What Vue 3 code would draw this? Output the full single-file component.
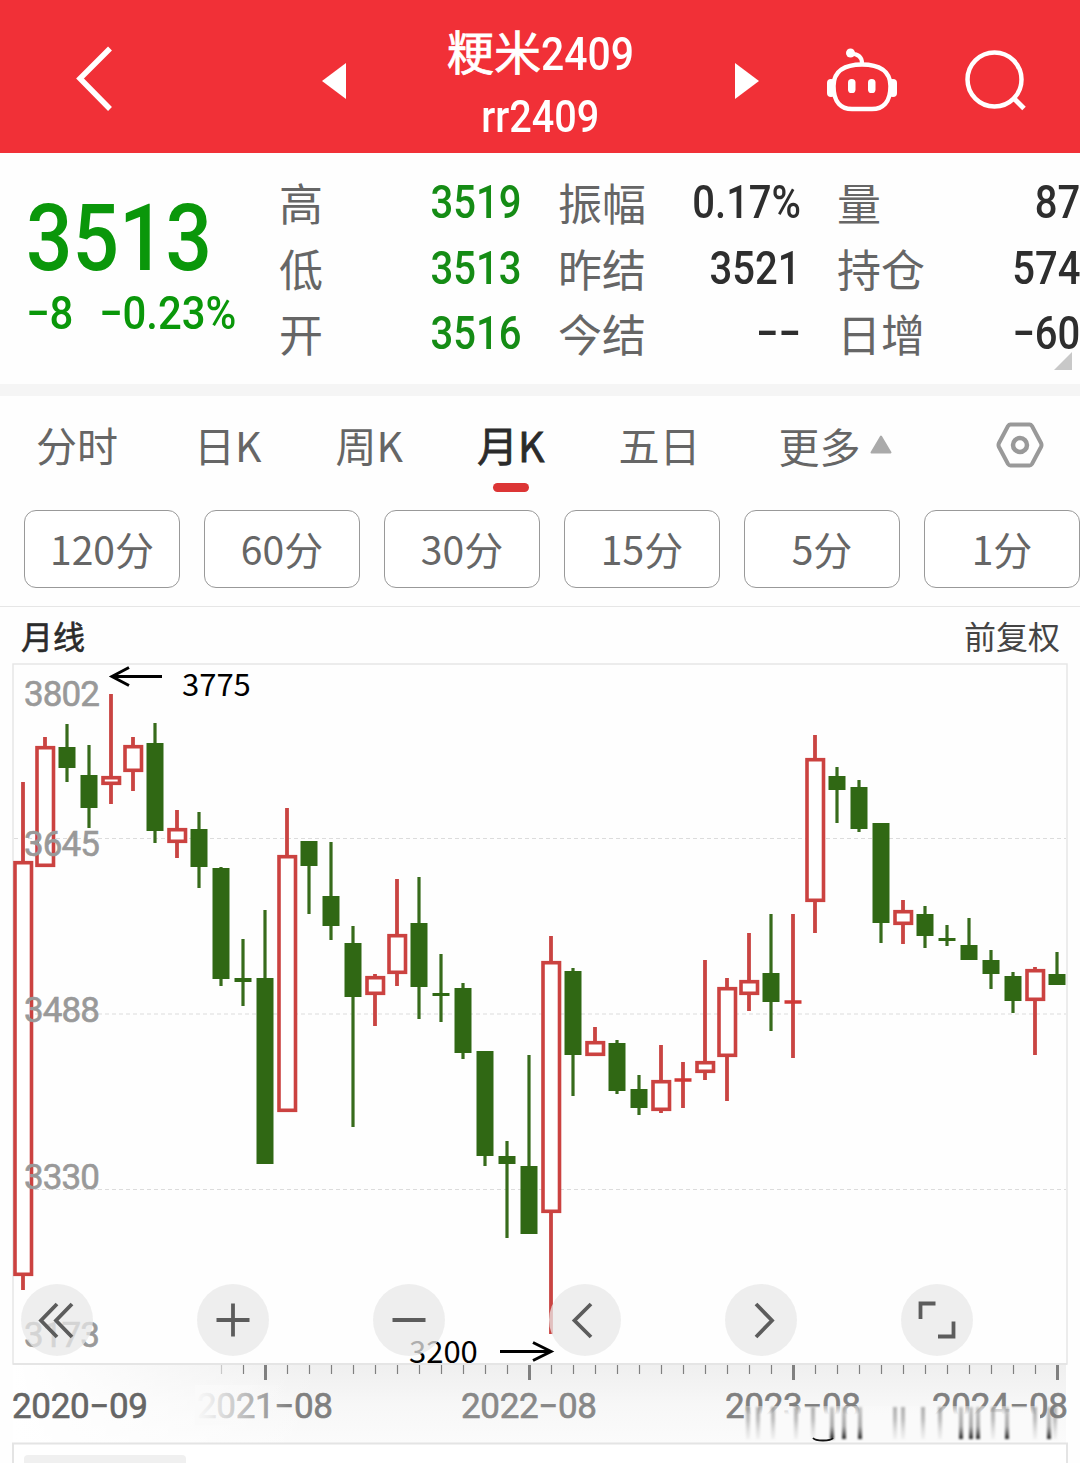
<template>
  <div class="page">
    <header class="header">
      <svg class="back" viewBox="0 0 44 72" width="44" height="72">
        <path d="M38 3.500 L8 33.500 L38 64" fill="none" stroke="#fff" stroke-width="5.500" />
      </svg>
      <svg class="prev" viewBox="0 0 24 36" width="24" height="36">
        <path d="M24 0 V36 L0 18 Z" fill="#fff" />
      </svg>
      <div class="title">
        <div class="name">粳米<span class="num">2409</span></div>
        <div class="code"><span class="num">rr2409</span></div>
      </div>
      <svg class="next" viewBox="0 0 24 36" width="24" height="36">
        <path d="M0 0 V36 L24 18 Z" fill="#fff" />
      </svg>
      <svg class="robot" viewBox="0 0 70 66" width="70" height="66">
        <path d="M35 15 C35 9 31 6 24 5.500" fill="none" stroke="#fff" stroke-width="4" />
        <circle cx="23.500" cy="5" r="4.500" fill="#fff" />
        <path d="M35 16.500 C52 16.500 63.500 23 63.500 38 C63.500 55 55 61 45 61 H25 C15 61 6.500 55 6.500 38 C6.500 23 18 16.500 35 16.500 Z" fill="none" stroke="#fff" stroke-width="4.500" />
        <rect x="0" y="31" width="8" height="18" rx="4" fill="#fff" />
        <rect x="62" y="31" width="8" height="18" rx="4" fill="#fff" />
        <rect x="21" y="31" width="7.500" height="14" rx="3.600" fill="#fff" />
        <rect x="41" y="31" width="7.500" height="14" rx="3.600" fill="#fff" />
      </svg>
      <svg class="search" viewBox="0 0 62 62" width="62" height="62">
        <circle cx="29.500" cy="29.500" r="27" fill="none" stroke="#fff" stroke-width="4.500" />
        <path d="M49 48.500 L59 58.500" stroke="#fff" stroke-width="5" />
      </svg>
    </header>

    <section class="quote">
      <div class="price">
        <div class="last"><span class="num">3513</span></div>
        <div class="change">
          <span class="num">−8</span>
          <span class="num">−0.23%</span>
        </div>
      </div>
      <div class="stats">
        <div v-for="item in stats" :key="item.label" class="stat">
          <span class="label">{{ item.label }}</span>
          <span class="num" :class="{ down: item.down }">{{ item.value }}</span>
        </div>
      </div>
      <svg class="corner" viewBox="0 0 18 18" width="18" height="18">
        <path d="M18 0 V18 H0 Z" fill="#c8c8c8" />
      </svg>
    </section>

    <nav class="tabs">
      <div
        v-for="tab in tabs"
        :key="tab"
        class="tab"
        :class="{ active: tab === activeTab }"
        @click="activeTab = tab"
      >
        {{ tab }}
      </div>
      <div class="tab more">
        更多
        <svg viewBox="0 0 22 19" width="22" height="19">
          <path d="M11 1.500 L20.500 17.500 H1.500 Z" fill="#aaa" stroke="#aaa" stroke-width="2" stroke-linejoin="round" />
        </svg>
      </div>
      <svg class="settings" viewBox="0 0 48 48" width="48" height="48">
        <path d="M14.500 3.500 H33.500 Q35 3.500 36 5 L45 22 Q46 24 45 26 L36 43 Q35 44.500 33.500 44.500 H14.500 Q13 44.500 12 43 L3 26 Q2 24 3 22 L12 5 Q13 3.500 14.500 3.500 Z" fill="none" stroke="#999" stroke-width="4" />
        <circle cx="24" cy="24" r="7" fill="none" stroke="#999" stroke-width="4.500" />
      </svg>
    </nav>

    <div class="periods">
      <button v-for="p in periods" :key="p" class="period">{{ p }}</button>
    </div>

    <div class="chart-head">
      <span class="kind">月线</span>
      <span class="adjust">前复权</span>
    </div>

    <div class="chart">
      <svg class="plot" viewBox="0 660 1080 803" width="1080" height="803">
        <defs>
          <linearGradient id="axisY" x1="0" y1="0" x2="0" y2="1">
            <stop offset="0" stop-color="#efefef" />
            <stop offset="0.500" stop-color="#f7f7f7" />
            <stop offset="1" stop-color="#fbfbfb" />
          </linearGradient>
          <linearGradient id="axisX" x1="0" y1="0" x2="1" y2="0">
            <stop offset="0" stop-color="#fff" />
            <stop offset="1" stop-color="#fff" stop-opacity="0" />
          </linearGradient>
          <linearGradient id="dateFade" x1="0" y1="0" x2="1" y2="0">
            <stop offset="0" stop-color="#fafafa" />
            <stop offset="0.150" stop-color="#fafafa" stop-opacity="0.900" />
            <stop offset="1" stop-color="#fafafa" stop-opacity="0" />
          </linearGradient>
          <linearGradient id="smear" x1="0" y1="0" x2="0" y2="1">
            <stop offset="0" stop-color="#fafafa" stop-opacity="0.400" />
            <stop offset="0.250" stop-color="#fafafa" />
          </linearGradient>
          <linearGradient id="streak" x1="0" y1="0" x2="0" y2="1">
            <stop offset="0" stop-color="#777" stop-opacity="0.550" />
            <stop offset="0.400" stop-color="#777" stop-opacity="0.450" />
            <stop offset="1" stop-color="#aaa" stop-opacity="0.100" />
          </linearGradient>
          <linearGradient id="streakDark" x1="0" y1="0" x2="0" y2="1">
            <stop offset="0" stop-color="#777" stop-opacity="0.400" />
            <stop offset="0.600" stop-color="#777" stop-opacity="0.600" />
            <stop offset="1" stop-color="#222" />
          </linearGradient>
        </defs>

        <!-- frame and price grid -->
        <rect x="13" y="664" width="1054" height="700" fill="none" stroke="#e6e6e6" stroke-width="1.500" />
        <line v-for="y in gridLines" :key="y" x1="14" :y1="y" x2="1066" :y2="y" stroke="#dcdcdc" stroke-width="1.200" stroke-dasharray="4 3" />

        <g v-for="c in candles" :key="c.x">
          <template v-if="c.up">
            <path :d="`M${c.x} ${c.high} V${c.top + 1} M${c.x} ${c.bottom - 1} V${c.low}`" stroke="#c94442" stroke-width="3.800" />
            <line v-if="c.bottom - c.top < 6" :x1="c.x - 8.5" :x2="c.x + 8.5" :y1="(c.top + c.bottom) / 2" :y2="(c.top + c.bottom) / 2" stroke="#d03836" stroke-width="3.500" />
            <rect v-else :x="c.x - 8" :y="c.top + 1.7" width="16.5" :height="c.bottom - c.top - 3.4" fill="#fff" stroke="#cb4240" stroke-width="3.600" />
          </template>
          <template v-else>
            <line :x1="c.x" :x2="c.x" :y1="c.high" :y2="c.low" stroke="#376b1b" stroke-width="3.200" />
            <rect :x="c.x - 8.5" :y="c.top" width="17" :height="c.bottom - c.top" fill="#306814" />
          </template>
        </g>

        <text v-for="l in priceLabels" :key="l.text" class="axis-num" x="24" :y="l.y" textLength="76" lengthAdjust="spacing" fill="#999" stroke="#999">{{ l.text }}</text>

        <!-- highest / lowest marks -->
        <path d="M162 676.500 H113 M129 667.500 L112 676.500 L129 685.500" fill="none" stroke="#000" stroke-width="3" />
        <text class="mark" x="182" y="695.500">3775</text>
        <path d="M500 1351.500 H550 M533 1342.500 L551 1351.500 L533 1360.500" fill="none" stroke="#000" stroke-width="3" />
        <text class="mark" x="409" y="1362.500">3200</text>

        <!-- time axis -->
        <rect x="13" y="1365" width="1053" height="78" fill="url(#axisY)" />
        <rect x="13" y="1365" width="310" height="78" fill="url(#axisX)" />
        <line x1="13" x2="1067" y1="1364" y2="1364" stroke="#e3e3e3" stroke-width="1.500" />
        <line v-for="t in ticks" :key="t.x" :x1="t.x" :x2="t.x" y1="1365" :y2="t.major ? 1380 : 1374" :stroke="t.faint ? '#c8c8c8' : '#808080'" :stroke-width="t.major ? 3 : 1.2" />
        <text v-for="d in dates" :key="d.text" class="axis-num" :x="d.x" y="1418" textLength="136" lengthAdjust="spacing" :fill="d.color" :stroke="d.color">{{ d.text }}</text>
        <rect x="195" y="1385" width="95" height="40" fill="url(#dateFade)" />

        <rect x="746" y="1406" width="294" height="35" fill="url(#smear)" />
        <g class="streaks">
          <rect v-for="s in streaks" :key="s.x" :x="s.x - 2" y="1407" width="4" height="32" :fill="s.dark ? 'url(#streakDark)' : 'url(#streak)'" />
        </g>
        <path d="M813 1438 Q815 1440.500 823 1440.500 Q831 1440.500 833 1438" fill="none" stroke="#111" stroke-width="1.800" />

        <!-- next panel -->
        <path d="M13 1463 V1443.500 H1067 V1463" fill="#fff" stroke="#e4e4e4" stroke-width="2" />
        <rect x="24" y="1455" width="162" height="20" rx="4" fill="#f0f0f0" />
      </svg>

      <div class="tools">
        <button v-for="t in tools" :key="t.name" class="tool" :aria-label="t.name">
          <svg viewBox="0 0 72 72" width="72" height="72">
            <path :d="t.path" fill="none" stroke="#5c5c5c" stroke-width="3.800" />
          </svg>
        </button>
      </div>
    </div>
  </div>
</template>

<script setup>
import { ref } from 'vue'

const stats = [
  { label: '高', value: '3519', down: true },
  { label: '振幅', value: '0.17%' },
  { label: '量', value: '87' },
  { label: '低', value: '3513', down: true },
  { label: '昨结', value: '3521' },
  { label: '持仓', value: '574' },
  { label: '开', value: '3516', down: true },
  { label: '今结', value: '−−' },
  { label: '日增', value: '−60' },
]

const tabs = ['分时', '日K', '周K', '月K', '五日']
const activeTab = ref('月K')
const periods = ['120分', '60分', '30分', '15分', '5分', '1分']

const gridLines = [838.5, 1014, 1189.5]
const priceLabels = [
  { text: '3802', y: 706 },
  { text: '3645', y: 856 },
  { text: '3488', y: 1022 },
  { text: '3330', y: 1189 },
  { text: '3173', y: 1347 },
]

// up flag, high, body top, body bottom, low
const rows = [
  [1, 782, 861, 1276, 1290], [1, 737, 746, 867, 867], [0, 724, 747, 768, 782], [0, 745, 775, 808, 828],
  [1, 694, 776, 785, 804], [1, 737, 745, 772, 791], [0, 723, 743, 831, 843], [1, 810, 828, 843, 858],
  [0, 812, 829, 867, 888], [0, 867, 868, 979, 986], [0, 939, 978, 982, 1006], [0, 910, 978, 1164, 1164],
  [1, 808, 855, 1112, 1112], [0, 841, 841, 866, 914], [0, 842, 896, 926, 940], [0, 926, 943, 997, 1127],
  [1, 974, 976, 995, 1026], [1, 879, 934, 974, 986], [0, 877, 923, 987, 1019], [0, 954, 993, 996, 1022],
  [0, 983, 988, 1053, 1059], [0, 1051, 1051, 1156, 1166], [0, 1141, 1156, 1164, 1238], [0, 1055, 1166, 1234, 1234],
  [1, 936, 961, 1213, 1334], [0, 968, 971, 1055, 1096], [1, 1027, 1041, 1056, 1056], [0, 1040, 1043, 1091, 1094],
  [0, 1075, 1089, 1108, 1115], [1, 1045, 1080, 1111, 1113], [1, 1062, 1078, 1082, 1108], [1, 960, 1061, 1073, 1080],
  [1, 978, 987, 1057, 1101], [1, 933, 980, 995, 1011], [0, 914, 973, 1002, 1031], [1, 914, 1000, 1004, 1058],
  [1, 735, 758, 902, 933], [0, 767, 776, 790, 823], [0, 780, 787, 829, 832], [0, 823, 823, 923, 943],
  [1, 900, 910, 925, 944], [0, 906, 914, 936, 948], [0, 925, 938, 941, 946], [0, 918, 945, 960, 960],
  [0, 950, 960, 974, 989], [0, 972, 976, 1001, 1013], [1, 967, 969, 1001, 1055], [0, 952, 974, 985, 985],
]
const candles = rows.map(([up, high, top, bottom, low], i) => ({ x: 23 + i * 22, up, high, top, bottom, low }))

const ticks = Array.from({ length: 39 }, (_, i) => ({
  x: 221.5 + i * 22,
  major: i % 12 === 2,
  faint: i === 0,
}))

const dates = [
  { text: '2020−09', x: 12, color: '#666' },
  { text: '2021−08', x: 197, color: '#808080' },
  { text: '2022−08', x: 461, color: '#888' },
  { text: '2023−08', x: 725, color: '#808080' },
  { text: '2024−08', x: 932, color: '#808080' },
]

const streaks = [
  ...[748, 758, 773, 796, 813, 895, 903, 923, 940, 993, 1035, 1055].map((x) => ({ x, dark: false })),
  ...[832, 844, 860, 961, 971, 978, 1007, 1049].map((x) => ({ x, dark: true })),
]

const tools = [
  { name: 'first', path: 'M36 20 L20 36.500 L36 53 M51 20 L35 36.500 L51 53' },
  { name: 'zoom in', path: 'M19.500 36 H52.500 M36 19.500 V52.500' },
  { name: 'zoom out', path: 'M19.500 36 H52.500' },
  { name: 'previous', path: 'M42 20 L25.500 36.500 L42 53' },
  { name: 'next', path: 'M31 20 L47 36.500 L31 53' },
  { name: 'full screen', path: 'M19.500 35 V19.500 H34.500 M52.500 37.500 V52.500 H37' },
]
</script>

<style>
body {
  margin: 0;
  background: #fff;
}
</style>

<style scoped>
.page {
  width: 1080px;
  height: 1463px;
  overflow: hidden;
  background: #fefefe;
  font-family: "Noto Sans CJK SC", sans-serif;
  color: #666;
}
.num {
  display: inline-block;
  font-family: Roboto, "Noto Sans CJK SC", sans-serif;
  font-weight: 500;
  transform: scaleX(0.87);
  transform-origin: left center;
  white-space: nowrap;
}

.header {
  display: flex;
  align-items: center;
  box-sizing: border-box;
  height: 153px;
  padding: 8px 53px 0 72px;
  background: #f13037;
  color: #fff;
}
.prev {
  margin-left: 206px;
}
.title {
  width: 389px;
  text-align: center;
}
.name {
  height: 64px;
  line-height: 68px;
  font-size: 47px;
  margin-right: -14px;
  -webkit-text-stroke: 0.700px #fff;
}
.name .num {
  -webkit-text-stroke: 0;
}
.code {
  height: 66px;
  line-height: 66px;
  font-size: 44.500px;
}
.code .num {
  transform: scaleX(0.89);
  transform-origin: center;
}
.robot {
  margin-left: 68px;
}
.search {
  margin-left: auto;
}

.quote {
  position: relative;
  display: flex;
  box-sizing: border-box;
  height: 243px;
  border-bottom: 12px solid #f5f5f5;
}
.price {
  width: 254px;
  padding: 35px 0 0 26px;
  color: #0a970a;
}
.last {
  height: 101px;
  line-height: 84px;
  font-size: 92px;
}
.last .num {
  transform: scaleX(0.89);
}
.change {
  display: flex;
  line-height: 48px;
  font-size: 46px;
}
.change .num {
  transform: scaleX(0.91);
}
.change .num + .num {
  margin-left: 21px;
}
.stats {
  display: grid;
  grid-template-columns: repeat(3, 243px);
  grid-auto-rows: 65.500px;
  column-gap: 36px;
  padding-top: 17px;
}
.stat {
  display: flex;
  justify-content: space-between;
  align-items: center;
  line-height: 65px;
  font-size: 46px;
  color: #2e2e2e;
}
.stat .label {
  font-size: 44px;
  color: #666;
}
.stat .num {
  transform-origin: right center;
}
.stat .num.down {
  color: #158c15;
}
.corner {
  position: absolute;
  right: 8px;
  bottom: 14px;
}

.tabs {
  display: flex;
  align-items: center;
  height: 98px;
  padding-left: 36px;
  font-size: 41px;
}
.tab {
  position: relative;
  height: 98px;
  line-height: 96px;
  white-space: nowrap;
}
.tab:nth-child(2) {
  margin-left: 76px;
}
.tab:nth-child(3),
.tab:nth-child(4) {
  margin-left: 74px;
}
.tab:nth-child(5) {
  margin-left: 74px;
}
.active {
  color: #2b2b2b;
  -webkit-text-stroke: 0.800px #2b2b2b;
}
.active::after {
  content: "";
  position: absolute;
  left: 50%;
  bottom: 2px;
  width: 36px;
  height: 9px;
  margin-left: -18px;
  border-radius: 5px;
  background: #dc3535;
}
.more {
  display: flex;
  align-items: center;
  gap: 9px;
  margin-left: 78px;
}
.more svg {
  margin-bottom: 2px;
}
.settings {
  margin-left: auto;
  margin-right: 36px;
}

.periods {
  display: flex;
  gap: 24px;
  box-sizing: border-box;
  height: 113px;
  padding: 16px 0 0 24px;
  border-bottom: 1px solid #e6e6e6;
}
.period {
  flex: none;
  box-sizing: border-box;
  width: 156px;
  height: 78px;
  padding: 0 0 2px;
  border: 1px solid #999;
  border-radius: 12px;
  background: #fff;
  font-family: inherit;
  font-size: 39px;
  color: #666;
}

.chart-head {
  display: flex;
  justify-content: space-between;
  height: 53px;
  padding: 0 20px 0 21px;
  line-height: 57px;
  font-size: 32px;
  color: #444;
}
.kind {
  color: #2b2b2b;
  -webkit-text-stroke: 0.600px #2b2b2b;
}

.chart {
  position: relative;
}
.plot {
  display: block;
}
.axis-num {
  font-family: Roboto, sans-serif;
  font-size: 35px;
  font-weight: 400;
  stroke-width: 0.600px;
}
.mark {
  font-size: 31px;
  fill: #000;
}
.streaks {
  filter: blur(0.800px);
}
.tools {
  position: absolute;
  left: 21px;
  top: 624px;
  display: flex;
  gap: 104px;
}
.tool {
  width: 72px;
  height: 72px;
  padding: 0;
  border: 0;
  border-radius: 50%;
  background: rgba(232, 232, 232, 0.75);
}
.tool svg {
  display: block;
}
</style>
